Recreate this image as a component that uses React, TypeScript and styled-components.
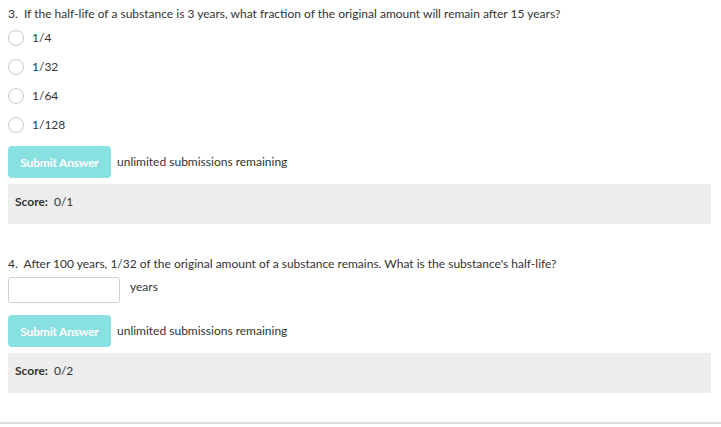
import React from "react";
import styled, { createGlobalStyle } from "styled-components";

const Global = createGlobalStyle`
  html, body { margin: 0; padding: 0; background: #fff; }
  body { font-family: Lato, "Open Sans", Arial, sans-serif; font-size: 12px; color: #333; }
  * { box-sizing: border-box; }
`;

const Page = styled.div`
  width: 721px;
  padding: 6px 10px 29px 8px;
  border-bottom: 2px solid #dedede;
`;

const Question = styled.section<{ $gapTop?: number }>`
  display: flex;
  flex-direction: column;
  margin-top: ${(p) => p.$gapTop ?? 0}px;
`;

const Prompt = styled.div`
  line-height: 16px;
  height: 16px;
  white-space: nowrap;
`;

const Options = styled.ul`
  list-style: none;
  margin: 1px 0 0;
  padding: 0;
  display: flex;
  flex-direction: column;
`;

const Option = styled.li`
  height: 29px;
  display: flex;
  align-items: center;
  gap: 8px;
`;

const Radio = styled.span`
  width: 16px;
  height: 16px;
  border-radius: 50%;
  border: 1px solid #c9c9c9;
  background: #fff;
  flex: none;
`;

const OptionLabel = styled.span`
  line-height: 16px;
`;

const SubmitRow = styled.div<{ $top: number }>`
  display: flex;
  align-items: center;
  gap: 6px;
  margin-top: ${(p) => p.$top}px;
`;

const SubmitButton = styled.button`
  height: 32px;
  width: 103px;
  padding: 0;
  border: none;
  border-radius: 4px;
  background: #89e0e0;
  color: #fff;
  font-family: inherit;
  font-size: 12px;
  font-weight: 700;
  letter-spacing: -0.2px;
`;

const Remaining = styled.span`
  line-height: 16px;
`;

const ScoreBox = styled.div`
  margin-top: 6px;
  height: 40px;
  background: #ededed;
  padding: 10px 7px;
  display: flex;
  gap: 6px;
  line-height: 16px;
`;

const ScoreLabel = styled.span`
  font-weight: 700;
`;

const AnswerRow = styled.div`
  display: flex;
  gap: 10px;
  margin-top: 5px;
`;

const AnswerInput = styled.input`
  width: 112px;
  height: 26px;
  border: 1px solid #cfcfcf;
  border-radius: 3px;
  background: #fff;
  font-family: inherit;
  font-size: 12px;
  padding: 0 6px;
  outline: none;
`;

const Unit = styled.span`
  line-height: 16px;
  margin-top: 2px;
`;

const options = ["1/4", "1/32", "1/64", "1/128"];

export default function App() {
  return (
    <>
      <Global />
      <Page>
        <Question>
          <Prompt>
            3.&nbsp; If the half-life of a substance is 3 years, what fraction of the original amount will remain after 15 years?
          </Prompt>
          <Options>
            {options.map((o) => (
              <Option key={o}>
                <Radio />
                <OptionLabel>{o}</OptionLabel>
              </Option>
            ))}
          </Options>
          <SubmitRow $top={7}>
            <SubmitButton>Submit Answer</SubmitButton>
            <Remaining>unlimited submissions remaining</Remaining>
          </SubmitRow>
          <ScoreBox>
            <ScoreLabel>Score:</ScoreLabel>
            <span>0/1</span>
          </ScoreBox>
        </Question>
        <Question $gapTop={32}>
          <Prompt>
            4.&nbsp; After 100 years, 1/32 of the original amount of a substance remains. What is the substance's half-life?
          </Prompt>
          <AnswerRow>
            <AnswerInput type="text" />
            <Unit>years</Unit>
          </AnswerRow>
          <SubmitRow $top={12}>
            <SubmitButton>Submit Answer</SubmitButton>
            <Remaining>unlimited submissions remaining</Remaining>
          </SubmitRow>
          <ScoreBox>
            <ScoreLabel>Score:</ScoreLabel>
            <span>0/2</span>
          </ScoreBox>
        </Question>
      </Page>
    </>
  );
}
